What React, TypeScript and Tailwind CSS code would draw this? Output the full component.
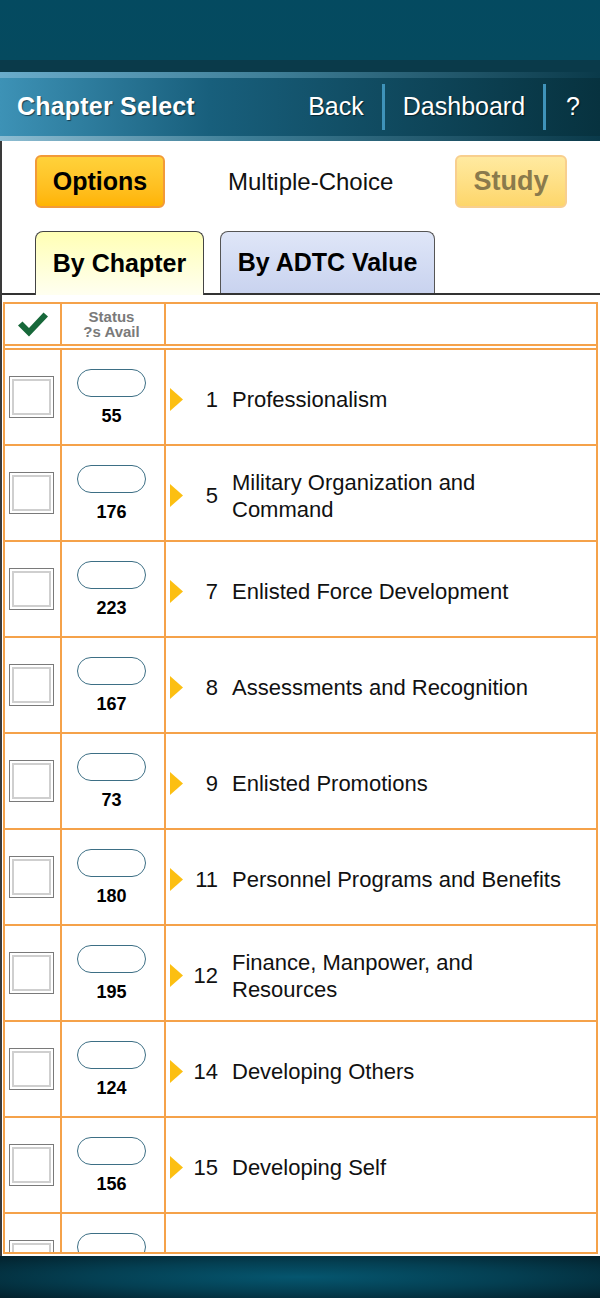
import React from "react";

type Chapter = {
  num: string;
  title: string;
  avail: string;
};

const chapters: Chapter[] = [
  { num: "1", title: "Professionalism", avail: "55" },
  { num: "5", title: "Military Organization and Command", avail: "176" },
  { num: "7", title: "Enlisted Force Development", avail: "223" },
  { num: "8", title: "Assessments and Recognition", avail: "167" },
  { num: "9", title: "Enlisted Promotions", avail: "73" },
  { num: "11", title: "Personnel Programs and Benefits", avail: "180" },
  { num: "12", title: "Finance, Manpower, and Resources", avail: "195" },
  { num: "14", title: "Developing Others", avail: "124" },
  { num: "15", title: "Developing Self", avail: "156" },
  { num: "", title: "", avail: "" },
];

const CheckMark = () => (
  <svg width="30" height="25" viewBox="0 0 30 25">
    <path d="M0 13.5 L4.5 9.5 L11 16 L25.5 0.5 L30 4.5 L11 24.5 Z" fill="#17683a" />
  </svg>
);

const Checkbox = () => (
  <div className="h-[42px] w-[45px] border-[1.5px] border-[#7a7a7a] bg-white p-[2px]">
    <div className="h-full w-full border-2 border-[#cfcfcf] bg-white" />
  </div>
);

const Row = ({ chapter }: { chapter: Chapter }) => (
  <div className="flex h-[96px] shrink-0 border-b-2 border-[#f5a24a]">
    <div className="flex w-[57px] shrink-0 items-center justify-center border-r-2 border-[#f5a24a] pr-[2px]">
      <Checkbox />
    </div>
    <div className="flex w-[104px] shrink-0 flex-col items-center border-r-2 border-[#f5a24a] pt-[19px] pr-[3px]">
      <div className="h-[28px] w-[69px] rounded-full border-[1.5px] border-[#3d6f85] bg-white" />
      <div className="mt-[8px] text-[18px] leading-[22px] font-bold text-black">
        {chapter.avail}
      </div>
    </div>
    <div className="flex flex-1 items-center pt-[5px] pl-[4px]">
      {chapter.title && (
        <>
          <svg width="13" height="23" viewBox="0 0 13 23" className="shrink-0">
            <path d="M0 0 L13 11.5 L0 23 Z" fill="#fcbf12" />
          </svg>
          <div className="w-[35px] shrink-0 text-right text-[22px] text-[#111]">
            {chapter.num}
          </div>
          <div className="ml-[14px] max-w-[345px] text-[22px] leading-[27px] text-[#111]">
            {chapter.title}
          </div>
        </>
      )}
    </div>
  </div>
);

export default function App() {
  return (
    <div className="flex h-[1298px] w-[600px] flex-col overflow-hidden bg-[#044a60] font-['Liberation_Sans',Arial,sans-serif]">
      <div className="h-[60px] shrink-0 bg-gradient-to-b from-[#044a60] to-[#054a5f]" />

      <header className="shrink-0">
        <div className="h-[12px] bg-[#0a3a4a]" />
        <div className="h-[6px] bg-gradient-to-r from-[#6aaccb] via-[#3f7f98] via-45% to-[#0a3a4a]" />
        <div className="flex h-[58px] items-center bg-gradient-to-r from-[#3d92b6] via-[#185f7c] via-35% to-[#07323f] pr-[20px] pl-[17px] text-white [text-shadow:1px_1px_1px_rgba(0,0,0,0.55)]">
          <h1 className="text-[25px] font-bold tracking-[0.2px]">Chapter Select</h1>
          <nav className="ml-auto flex items-center">
            <span className="text-[25px]">Back</span>
            <span className="mx-[18px] h-[46px] w-[3px] bg-[#3f93ba]" />
            <span className="text-[25px]">Dashboard</span>
            <span className="mr-[20px] ml-[18px] h-[46px] w-[3px] bg-[#3f93ba]" />
            <span className="text-[25px]">?</span>
          </nav>
        </div>
        <div className="h-[5px] bg-gradient-to-r from-[#8dbdd2] via-[#3e7f98] via-40% to-[#0a3a4a]" />
      </header>

      <main className="flex flex-1 flex-col border-l-2 border-[#3a3a3a] bg-white">
        <div className="flex items-center pt-[14px] pl-[33px]">
          <button className="h-[53px] w-[130px] rounded-[6px] border-2 border-[#f29a38] bg-gradient-to-b from-[#ffd23a] to-[#ffb400] text-[25px] font-bold text-black">
            Options
          </button>
          <span className="ml-[63px] text-[24px] text-[#111]">Multiple-Choice</span>
          <button className="ml-auto mr-[33px] h-[53px] w-[112px] rounded-[6px] border-2 border-[#f8cf8e] bg-gradient-to-b from-[#ffeaa0] to-[#fdd66a] text-[27px] font-bold text-[#8a7a4c]">
            Study
          </button>
        </div>

        <div className="mt-[23px] flex items-end border-b-2 border-[#333] pl-[33px]">
          <div className="-mb-[2px] flex h-[64px] w-[169px] items-center justify-center rounded-t-[8px] border-[1.5px] border-b-0 border-[#444] bg-gradient-to-b from-[#ffffb4] to-[#fffff0] text-[25px] font-bold text-black">
            By Chapter
          </div>
          <div className="ml-[16px] flex h-[62px] w-[215px] items-center justify-center rounded-t-[8px] border-[1.5px] border-b-0 border-[#555] bg-gradient-to-b from-[#dfe6f8] to-[#c9d3ef] text-[25px] font-bold text-black">
            By ADTC Value
          </div>
        </div>

        <div className="mt-[7px] mr-[2px] ml-[1px] flex h-[952px] flex-col overflow-hidden border-2 border-[#f5a24a]">
          <div className="flex h-[42px] shrink-0 border-b-2 border-[#f5a24a]">
            <div className="flex w-[57px] items-center justify-center border-r-2 border-[#f5a24a]">
              <CheckMark />
            </div>
            <div className="flex w-[104px] flex-col items-center justify-center border-r-2 border-[#f5a24a] pr-[3px] text-[15px] leading-[15px] font-bold text-[#7a7a7a]">
              <span>Status</span>
              <span>?s Avail</span>
            </div>
            <div className="flex-1" />
          </div>
          <div className="mt-[2px] flex flex-col border-t-2 border-[#f5a24a]">
            {chapters.map((c, i) => (
              <Row key={i} chapter={c} />
            ))}
          </div>
        </div>
      </main>

      <footer className="h-[42px] shrink-0 bg-[radial-gradient(ellipse_at_center,#05566f_0%,#043f52_50%,#03212c_100%)]" />
    </div>
  );
}
